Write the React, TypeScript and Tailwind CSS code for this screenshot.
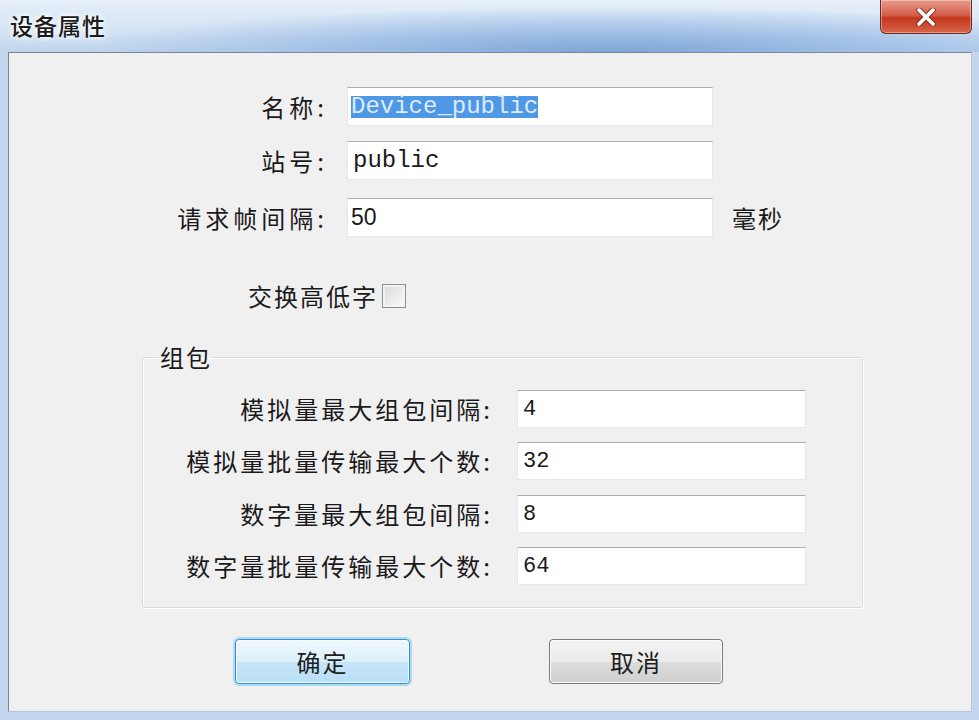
import React from 'react';

const cjk = "font-['Noto_Sans_CJK_SC',sans-serif]";

const TopRow: React.FC<{ label: string; children: React.ReactNode; suffix?: string; className?: string }> = ({ label, children, suffix, className }) => (
  <div className={`flex items-center ${className || ''}`}>
    <div className="w-[319px] text-right text-[24px] tracking-[4px] text-[#1a1a1a] leading-none">{label}</div>
    <div className="ml-[19px] w-[366px] h-[39px] bg-white border border-[#e2e8ee] border-t-[#a9acb2] flex items-center">
      {children}
    </div>
    {suffix && <div className="ml-[19px] text-[24px] tracking-[2px] text-[#1a1a1a] leading-none">{suffix}</div>}
  </div>
);

const GroupRow: React.FC<{ label: string; value: string; className?: string }> = ({ label, value, className }) => (
  <div className={`flex items-center ${className || ''}`}>
    <div className="w-[350px] text-right text-[24px] tracking-[3px] text-[#1a1a1a] leading-none">{label}</div>
    <div className="ml-[24px] w-[289px] h-[38px] bg-white border border-[#e2e8ee] border-t-[#a9acb2] flex items-center pl-[5px]">
      <span className="font-['Liberation_Mono',monospace] text-[22px] text-[#1a1a1a]">{value}</span>
    </div>
  </div>
);

export default function App() {
  return (
    <div className={`w-[979px] h-[720px] flex flex-col overflow-hidden bg-[#c3d6ee] ${cjk}`}>
      {/* Title bar */}
      <div className="h-[52px] flex items-start bg-[radial-gradient(ellipse_at_62%_100%,#7ea6d8_0%,rgba(150,185,228,0.65)_35%,transparent_62%),linear-gradient(to_bottom,#e6eff9,#d4e3f4_60%,#bfd4ec)]">
        <div className="pl-[10px] pt-[8px] text-[23px] font-medium text-[#1b1b1b] tracking-[1px] [text-shadow:0_0_8px_#ffffff,0_0_4px_#ffffff]">设备属性</div>
        <div className="ml-auto mr-[7px] w-[92px] h-[34px] rounded-b-[6px] border border-t-0 border-[#6e2a22] bg-[linear-gradient(to_bottom,#e79a8a,#d5604d_45%,#c4371f_55%,#d8654a)] flex items-center justify-center shadow-[inset_0_0_0_1px_rgba(255,255,255,0.35)]">
          <svg width="22" height="18" viewBox="0 0 22 18">
            <path d="M4 2 L18 16 M18 2 L4 16" stroke="#5b1d14" strokeWidth="6" strokeLinecap="round" opacity="0.5" />
            <path d="M4 2 L18 16 M18 2 L4 16" stroke="#ffffff" strokeWidth="3.5" strokeLinecap="round" />
          </svg>
        </div>
      </div>

      {/* Client area */}
      <div className="flex-1 flex pl-[8px] pr-[7px] pb-[8px]">
        <div className="flex-1 flex flex-col bg-[#f0f0f0] border border-[#7a8797] border-r-[#b8c8dc] border-b-[#b8c8dc]">
          <TopRow label="名称:" className="mt-[34px]">
            <span className="ml-[3px] font-['Liberation_Mono',monospace] text-[24px] leading-[22px] bg-[#4f98e6] text-[#dcebff]">Device_public</span>
          </TopRow>
          <TopRow label="站号:" className="mt-[15px]">
            <span className="ml-[5px] font-['Liberation_Mono',monospace] text-[24px] text-[#1a1a1a]">public</span>
          </TopRow>
          <TopRow label="请求帧间隔:" suffix="毫秒" className="mt-[18px]">
            <span className="ml-[3px] font-['Liberation_Sans',sans-serif] text-[23px] text-[#1a1a1a]">50</span>
          </TopRow>

          <div className="mt-[47px] flex items-center pl-[239px]">
            <span className="text-[24px] tracking-[2px] text-[#1a1a1a] leading-none">交换高低字</span>
            <span className="ml-[4px] w-[24px] h-[24px] border border-[#8e8f8f] bg-[linear-gradient(135deg,#d8d8d8,#fbfbfb)] shadow-[inset_0_0_0_2px_#f4f4f4]" />
          </div>

          <fieldset className="mt-[34px] ml-[133px] w-[721px] rounded-[3px] border border-[#d5dde3] shadow-[inset_1px_1px_0_#ffffff,1px_1px_0_#ffffff] pb-[22px]">
            <legend className="ml-[16px] px-[1px] text-[24px] tracking-[2px] text-[#1a1a1a] leading-[30px]">组包</legend>
            <GroupRow label="模拟量最大组包间隔:" value="4" className="mt-[18px]" />
            <GroupRow label="模拟量批量传输最大个数:" value="32" className="mt-[14px]" />
            <GroupRow label="数字量最大组包间隔:" value="8" className="mt-[15px]" />
            <GroupRow label="数字量批量传输最大个数:" value="64" className="mt-[14px]" />
          </fieldset>

          <div className="mt-[31px] flex pl-[226px]">
            <button className="w-[175px] h-[45px] rounded-[4px] border border-[#3c8fc9] shadow-[0_0_0_2px_#a7dcf7,inset_0_0_0_1px_#ffffff] bg-[linear-gradient(to_bottom,#eef8fd,#dcf0fb_50%,#c7e6f8_51%,#b9def5)] text-[24px] tracking-[2px] text-[#1e1e1e]">
              确定
            </button>
            <button className="ml-[139px] w-[174px] h-[45px] rounded-[4px] border border-[#7a7a7a] shadow-[inset_0_0_0_1px_#fcfcfc] bg-[linear-gradient(to_bottom,#f3f3f3,#ebebeb_50%,#dddddd_51%,#cfcfcf)] text-[24px] tracking-[2px] text-[#1e1e1e]">
              取消
            </button>
          </div>
        </div>
      </div>
    </div>
  );
}
